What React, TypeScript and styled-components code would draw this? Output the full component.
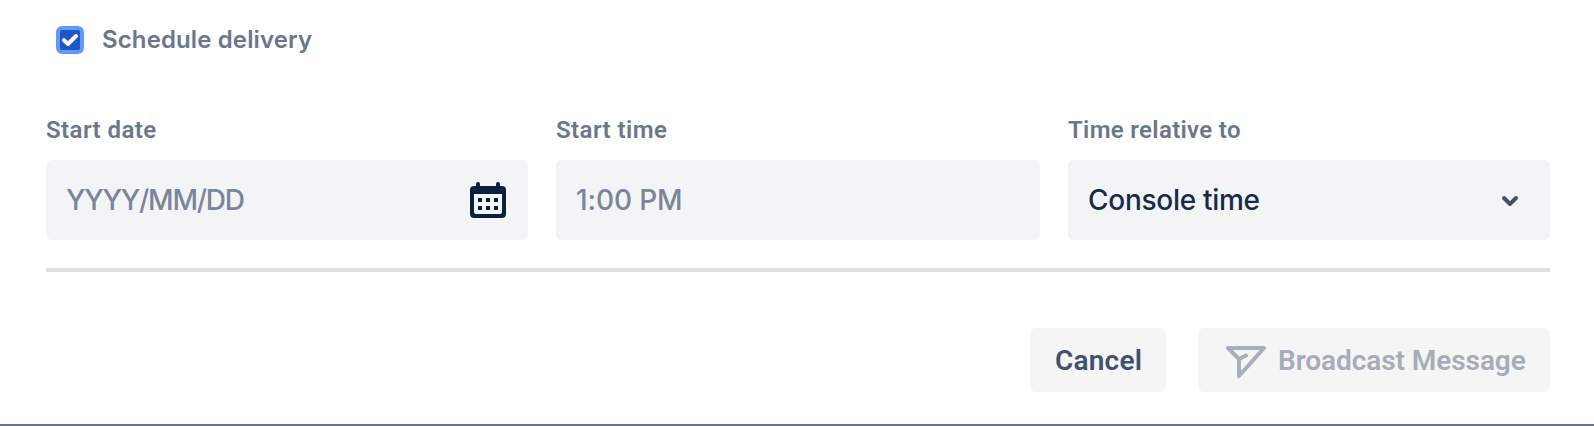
import React from "react";
import styled, { createGlobalStyle } from "styled-components";

const GlobalStyle = createGlobalStyle`
  * { box-sizing: border-box; }
  body { margin: 0; background: #fff; }
`;

const Panel = styled.main`
  display: flex;
  flex-direction: column;
  width: 1594px;
  height: 426px;
  padding: 26px 44px 0 46px;
  border-bottom: 2px solid #69748b;
  background: #fff;
`;

const Text = styled.span<{ $face?: string; $size: number; $weight: number; $color: string; $spacing?: number }>`
  font-family: ${(p) => p.$face ?? "Inter"}, "Liberation Sans", sans-serif;
  font-size: ${(p) => p.$size}px;
  font-weight: ${(p) => p.$weight};
  color: ${(p) => p.$color};
  letter-spacing: ${(p) => p.$spacing ?? 0}px;
  line-height: 28px;
  white-space: nowrap;
`;

const CheckRow = styled.label`
  display: flex;
  align-items: center;
  gap: 18px;
  height: 28px;
  padding-left: 10px;
`;

const CheckBox = styled.span`
  display: flex;
  width: 28px;
  height: 28px;
  border: 4px solid #5e9bf8;
  border-radius: 6px;
  background: #1f55c7;
`;

const Fields = styled.div`
  display: grid;
  grid-template-columns: 482px 484px 482px;
  gap: 28px;
  margin-top: 62px;
`;

const Field = styled.div`
  display: flex;
  flex-direction: column;
  gap: 16px;
`;

const FieldBox = styled.div`
  display: flex;
  align-items: center;
  justify-content: space-between;
  height: 80px;
  padding: 0 20px;
  border-radius: 6px;
  background: #f3f4f6;
`;

const Divider = styled.hr`
  width: 100%;
  height: 4px;
  margin: 28px 0 0;
  border: 0;
  background: #dfe1e4;
`;

const Actions = styled.div`
  display: flex;
  justify-content: flex-end;
  gap: 32px;
  margin-top: 56px;
`;

const Button = styled.button<{ $width: number; $indent: number }>`
  display: flex;
  align-items: center;
  gap: 12px;
  width: ${(p) => p.$width}px;
  height: 64px;
  padding: 2px 0 0 ${(p) => p.$indent}px;
  border: 0;
  border-radius: 6px;
  background: #f5f5f5;
`;

const CheckIcon = () => (
  <svg width="20" height="20" viewBox="0 0 20 20" fill="none" stroke="#fff" strokeWidth="4" strokeLinecap="round" strokeLinejoin="round">
    <path d="M4 10.2 8 14 16 6" />
  </svg>
);

const CalendarIcon = () => (
  <svg width="40" height="40" viewBox="0 0 40 40">
    <g fill="#0c1f40">
      <rect x="8" y="2" width="4" height="8" rx="2" />
      <rect x="28" y="2" width="4" height="8" rx="2" />
      <path fillRule="evenodd" d="M6 6H34Q38 6 38 10V34Q38 38 34 38H6Q2 38 2 34V10Q2 6 6 6ZM6 14V32Q6 34 8 34H32Q34 34 34 32V14Z" />
      {[18, 26].map((y) => [10, 18, 26].map((x) => <rect key={`${x}-${y}`} x={x} y={y} width="4" height="4" />))}
    </g>
  </svg>
);

const ChevronIcon = () => (
  <svg width="40" height="40" viewBox="0 0 40 40" fill="none" stroke="#42526e" strokeWidth="4" strokeLinecap="round" strokeLinejoin="round">
    <path d="M14 18 20 24 26 18" />
  </svg>
);

const SendIcon = () => (
  <svg width="40" height="34" viewBox="0 0 40 34" fill="none" stroke="#a7afbc" strokeWidth="4" strokeLinecap="round" strokeLinejoin="round">
    <path d="M2 4H38L13 32V15ZM13 15 20 11.5" />
  </svg>
);

export default function App() {
  const label = { $face: "Roboto", $size: 24, $weight: 650, $color: "#6b778c" };
  return (
    <>
      <GlobalStyle />
      <Panel>
        <CheckRow>
          <CheckBox><CheckIcon /></CheckBox>
          <Text $size={24} $weight={600} $color="#6b778c" $spacing={0.12}>Schedule delivery</Text>
        </CheckRow>
        <Fields>
          <Field>
            <Text {...label} $spacing={0.45}>Start date</Text>
            <FieldBox>
              <Text $size={28} $weight={550} $color="#7a869a" $spacing={-1.25}>YYYY/MM/DD</Text>
              <CalendarIcon />
            </FieldBox>
          </Field>
          <Field>
            <Text {...label} $spacing={0.45}>Start time</Text>
            <FieldBox>
              <Text $size={28} $weight={550} $color="#7a869a" $spacing={-0.1}>1:00 PM</Text>
            </FieldBox>
          </Field>
          <Field>
            <Text {...label} $spacing={0.33}>Time relative to</Text>
            <FieldBox>
              <Text $size={28} $weight={530} $color="#172b4d" $spacing={-0.28}>Console time</Text>
              <ChevronIcon />
            </FieldBox>
          </Field>
        </Fields>
        <Divider />
        <Actions>
          <Button $width={136} $indent={25}>
            <Text $face="Roboto" $size={28} $weight={600} $color="#42526e" $spacing={0.2}>Cancel</Text>
          </Button>
          <Button $width={352} $indent={28} disabled>
            <SendIcon />
            <Text $face="Roboto" $size={28} $weight={600} $color="#a5adba" $spacing={-0.07}>Broadcast Message</Text>
          </Button>
        </Actions>
      </Panel>
    </>
  );
}
